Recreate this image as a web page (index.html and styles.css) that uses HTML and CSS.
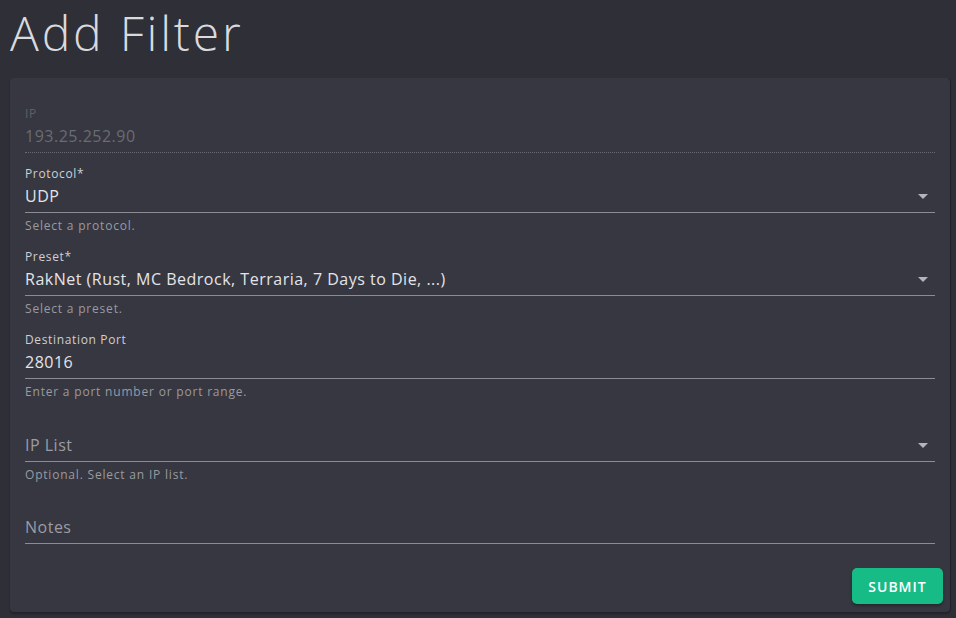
FILE: index.html
```html
<!DOCTYPE html>
<html lang="en">
<head>
<meta charset="utf-8">
<title>Add Filter</title>
<link rel="stylesheet" href="styles.css">
</head>
<body>
<main class="page">
  <h1 class="title">Add Filter</h1>
  <section class="card">
    <form class="form">
      <div class="field field--disabled field--nohint">
        <label class="label">IP</label>
        <div class="control control--dotted"><span class="value">193.25.252.90</span></div>
      </div>
      <div class="field">
        <label class="label">Protocol*</label>
        <div class="control"><span class="value">UDP</span><span class="caret"></span></div>
        <div class="hint">Select a protocol.</div>
      </div>
      <div class="field">
        <label class="label">Preset*</label>
        <div class="control"><span class="value">RakNet (Rust, MC Bedrock, Terraria, 7 Days to Die, ...)</span><span class="caret"></span></div>
        <div class="hint">Select a preset.</div>
      </div>
      <div class="field">
        <label class="label">Destination Port</label>
        <div class="control"><span class="value">28016</span></div>
        <div class="hint">Enter a port number or port range.</div>
      </div>
      <div class="field field--tight">
        <label class="label"></label>
        <div class="control"><span class="value value--placeholder">IP List</span><span class="caret"></span></div>
        <div class="hint">Optional. Select an IP list.</div>
      </div>
      <div class="field field--nohint">
        <label class="label"></label>
        <div class="control"><span class="value value--placeholder">Notes</span></div>
      </div>
      <div class="actions">
        <button type="button" class="btn-submit">Submit</button>
      </div>
    </form>
  </section>
</main>
</body>
</html>
```

FILE: styles.css
```css
* { box-sizing: border-box; }
html, body { margin: 0; padding: 0; }
body {
  background: #2e2f37;
  font-family: "Open Sans", "Noto Sans", sans-serif;
  color: #e2e2e6;
  width: 956px;
  height: 618px;
  overflow: hidden;
}
.page {
  padding: 0 7px 0 10px;
}
.title {
  margin: 0;
  padding-top: 2px;
  height: 78px;
  font-size: 48px;
  line-height: 62px;
  font-weight: 300;
  color: #d9d9de;
  letter-spacing: 2.8px;
}
.card {
  background: #363740;
  border-radius: 4px;
  box-shadow: 0 2px 2px rgba(0,0,0,0.25), 1px 0 0 rgba(0,0,0,0.2);
  padding: 27px 15px 8px 15px;
  width: 940px;
}
.form { display: flex; flex-direction: column; }
.field {
  display: flex;
  flex-direction: column;
  margin-bottom: 16px;
}
.field--nohint { margin-bottom: 12px; }
.field--tight { margin-bottom: 15px; }
.label {
  display: block;
  height: 16px;
  font-size: 12px;
  line-height: 16px;
  color: #cfcfd4;
  margin-top: 1px;
  margin-bottom: 2px;
  letter-spacing: 0.65px;
}
.control {
  display: flex;
  align-items: center;
  height: 29px;
  padding-bottom: 5px;
  border-bottom: 1px solid #8c8c93;
  position: relative;
}
.control--dotted {
  border-bottom: 1px dotted #6a6b72;
}
.value {
  flex: 1;
  font-size: 16px;
  line-height: 24px;
  color: #e4e4e8;
  letter-spacing: 0.5px;
}
.value--placeholder { color: #9c9ca3; }
.field--disabled .label { color: #5f6068; }
.field--disabled .value { color: #6a6b73; }
.caret {
  width: 0;
  height: 0;
  border-left: 5px solid transparent;
  border-right: 5px solid transparent;
  border-top: 5px solid #b4b4bb;
  margin-right: 7px;
  margin-top: 2px;
}
.hint {
  font-size: 12px;
  line-height: 14px;
  margin-top: 6px;
  margin-bottom: -1px;
  color: #9a9aa1;
  letter-spacing: 0.8px;
}
.actions {
  display: flex;
  justify-content: flex-end;
  margin-top: 12px;
  margin-right: -8px;
}
.btn-submit {
  background: #16bb86;
  color: #ffffff;
  border: none;
  border-radius: 5px;
  height: 36px;
  width: 91px;
  font-family: "Open Sans", "Noto Sans", sans-serif;
  font-size: 14px;
  font-weight: 600;
  letter-spacing: 1px;
  text-transform: uppercase;
  box-shadow: 0 2px 3px rgba(0,0,0,0.3);
}
```
